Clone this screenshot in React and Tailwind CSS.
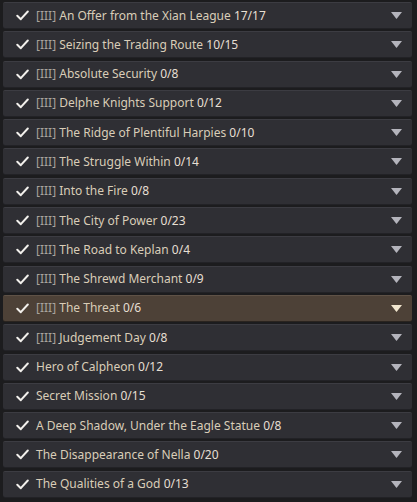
import React from 'react'

const quests = [
  { tag: '[III]', title: 'An Offer from the Xian League', count: '17/17' },
  { tag: '[III]', title: 'Seizing the Trading Route', count: '10/15' },
  { tag: '[III]', title: 'Absolute Security', count: '0/8' },
  { tag: '[III]', title: 'Delphe Knights Support', count: '0/12' },
  { tag: '[III]', title: 'The Ridge of Plentiful Harpies', count: '0/10' },
  { tag: '[III]', title: 'The Struggle Within', count: '0/14' },
  { tag: '[III]', title: 'Into the Fire', count: '0/8' },
  { tag: '[III]', title: 'The City of Power', count: '0/23' },
  { tag: '[III]', title: 'The Road to Keplan', count: '0/4' },
  { tag: '[III]', title: 'The Shrewd Merchant', count: '0/9' },
  { tag: '[III]', title: 'The Threat', count: '0/6', active: true },
  { tag: '[III]', title: 'Judgement Day', count: '0/8' },
  { tag: null, title: 'Hero of Calpheon', count: '0/12' },
  { tag: null, title: 'Secret Mission', count: '0/15' },
  { tag: null, title: 'A Deep Shadow, Under the Eagle Statue', count: '0/8' },
  { tag: null, title: 'The Disappearance of Nella', count: '0/20' },
  { tag: null, title: 'The Qualities of a God', count: '0/13' },
]

function Check() {
  return (
    <svg width="13" height="11" viewBox="0 0 13 11" className="shrink-0">
      <path d="M1.3 5.8 L4.8 9.2 L11.8 1.5" fill="none" stroke="#f2f0ec" strokeWidth="2" strokeLinecap="round" strokeLinejoin="round" />
    </svg>
  )
}

function Arrow({ active }) {
  return (
    <svg width="11" height="7" viewBox="0 0 11 7" className="shrink-0">
      <path d="M0 0 H11 L5.5 7 Z" fill={active ? '#f1e6cf' : '#b4b4bc'} />
    </svg>
  )
}

function QuestRow({ q }) {
  return (
    <div
      className={
        'h-[26px] flex items-center pl-[13px] pr-[10px] rounded-[2px] border-t ' +
        (q.active
          ? 'bg-[#4d4137] border-[#5f5247] shadow-[0_1px_0_#2a241f]'
          : 'bg-[#2f2f34] border-[#3c3c42] shadow-[0_1px_0_#222226]')
      }
    >
      <Check />
      <div className="ml-[7px] flex-1 text-[12px] leading-none whitespace-nowrap">
        {q.tag && <span className="text-[#a8a39d]">{q.tag} </span>}
        <span className="text-[#d9cdb8]">{q.title}</span>
        <span className="text-[#e6dfd3]"> {q.count}</span>
      </div>
      <Arrow active={q.active} />
    </div>
  )
}

export default function App() {
  return (
    <div
      className="w-[417px] h-[502px] overflow-hidden bg-[#1c1c1e] pt-[2px] pl-[3px] pr-[5px]"
      style={{ fontFamily: '"Noto Sans", "Open Sans", sans-serif' }}
    >
      <div className="flex flex-col gap-[3.3px]">
        {quests.map((q, i) => (
          <QuestRow key={i} q={q} />
        ))}
      </div>
    </div>
  )
}
